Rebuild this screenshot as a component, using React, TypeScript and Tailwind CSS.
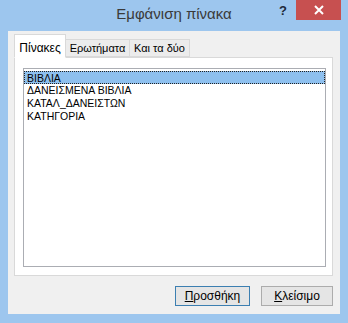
import React from 'react';

const items = ['ΒΙΒΛΙΑ', 'ΔΑΝΕΙΣΜΕΝΑ ΒΙΒΛΙΑ', 'ΚΑΤΑΛ_ΔΑΝΕΙΣΤΩΝ', 'ΚΑΤΗΓΟΡΙΑ'];

export default function App() {
  return (
    <div
      className="w-[348px] h-[323px] bg-[#9dc6ee] flex flex-col"
      style={{ fontFamily: '"Liberation Sans", Arial, sans-serif' }}
    >
      {/* title bar */}
      <div className="h-[31px] flex items-start shrink-0">
        <div className="flex-1 h-full flex items-center justify-center pl-[78px] text-[15px] text-[#3a3a3a] pb-[2px]">
          Εμφάνιση πίνακα
        </div>
        <div className="w-[26px] h-[22px] flex items-center justify-center text-[13px] font-bold text-[#1e2a3a]">?</div>
        <div className="w-[45px] h-[20px] mr-[7px] bg-[#c75050] flex items-center justify-center">
          <svg width="10" height="10" viewBox="0 0 10 10">
            <path d="M1 1 L9 9 M9 1 L1 9" stroke="#fff" strokeWidth="2" />
          </svg>
        </div>
      </div>

      {/* client */}
      <div className="flex-1 mx-[8px] mb-[9px] bg-[#f0f0f0] flex flex-col pl-[6px] pr-[7px]">
        {/* tabs */}
        <div className="h-[26px] flex items-end text-[12px] text-black relative z-10">
          <div className="w-[52px] h-[24px] -mb-px bg-white border border-[#d9d9d9] border-b-white flex items-start justify-center pt-[4px]">
            Πίνακες
          </div>
          <div className="w-[64px] h-[18px] bg-[#ececec] border border-[#d9d9d9] border-l-0 flex items-center justify-center text-[11px]">
            Ερωτήματα
          </div>
          <div className="w-[60px] h-[18px] bg-[#ececec] border border-[#d9d9d9] border-l-0 flex items-center justify-center text-[11px]">
            Και τα δύο
          </div>
        </div>

        {/* panel */}
        <div className="h-[219px] bg-white border border-[#d9d9d9] pt-[10px] pl-[8px] pr-[6px] pb-[8px] flex">
          <div className="flex-1 border border-[#abadb3] bg-white pt-[2px]">
            {items.map((t, i) => (
              <div
                key={t}
                className={
                  i === 0
                    ? 'h-[13px] leading-[12px] text-[10.5px] px-[2px] bg-[#8ec0ef] border border-dotted border-[#222] text-black'
                    : 'h-[13px] leading-[13px] text-[10.5px] px-[3px] text-black'
                }
              >
                {t}
              </div>
            ))}
          </div>
        </div>

        {/* buttons */}
        <div className="flex justify-end gap-[11px] mt-[10px] text-[12px] text-black">
          <button className="w-[75px] h-[20px] border border-[#3c7fb1] bg-[#e5e5e5] flex items-center justify-center">
            <span><span className="underline">Π</span>ροσθήκη</span>
          </button>
          <button className="w-[72px] h-[20px] border border-[#acacac] bg-[#e5e5e5] flex items-center justify-center">
            <span><span className="underline">Κ</span>λείσιμο</span>
          </button>
        </div>
      </div>
    </div>
  );
}
